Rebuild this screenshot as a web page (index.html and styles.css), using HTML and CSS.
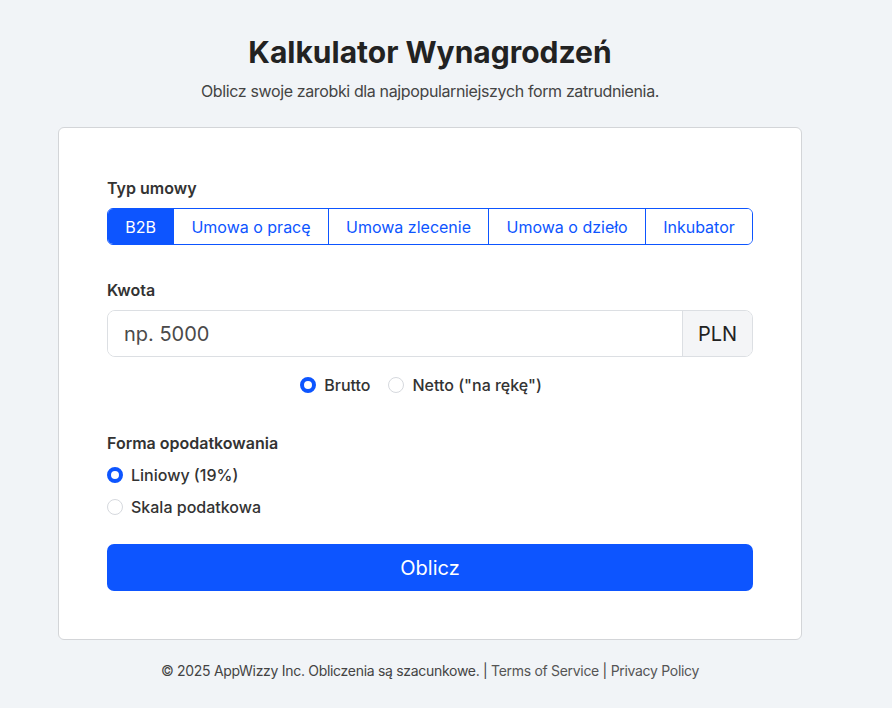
FILE: index.html
```html
<!DOCTYPE html>
<html lang="pl">
<head>
<meta charset="utf-8">
<title>Kalkulator Wynagrodzeń</title>
<link rel="stylesheet" href="styles.css">
</head>
<body>
<div class="page">
  <header class="header">
    <h1 class="title">Kalkulator Wynagrodzeń</h1>
    <p class="subtitle">Oblicz swoje zarobki dla najpopularniejszych form zatrudnienia.</p>
  </header>
  <main class="card">
    <div class="label">Typ umowy</div>
    <div class="btn-group">
      <button class="seg active">B2B</button>
      <button class="seg">Umowa o pracę</button>
      <button class="seg">Umowa zlecenie</button>
      <button class="seg">Umowa o dzieło</button>
      <button class="seg">Inkubator</button>
    </div>

    <div class="label label-kwota">Kwota</div>
    <div class="input-group">
      <input class="amount" type="text" placeholder="np. 5000">
      <span class="addon">PLN</span>
    </div>
    <div class="inline-radios">
      <label class="check inline"><input type="radio" name="mode" checked><span>Brutto</span></label>
      <label class="check inline"><input type="radio" name="mode"><span>Netto ("na rękę")</span></label>
    </div>

    <div class="label label-forma">Forma opodatkowania</div>
    <div class="stack-radios">
      <label class="check"><input type="radio" name="tax" checked><span>Liniowy (19%)</span></label>
      <label class="check"><input type="radio" name="tax"><span>Skala podatkowa</span></label>
    </div>

    <button class="submit">Oblicz</button>
  </main>
  <footer class="footer">© 2025 AppWizzy Inc. Obliczenia są szacunkowe. | <a href="#">Terms of Service</a> | <a href="#">Privacy Policy</a></footer>
</div>
</body>
</html>
```
FILE: styles.css
```css
* { box-sizing: border-box; }
html, body { margin: 0; padding: 0; }
body {
  background: #f1f4f7;
  font-family: Inter, "Noto Sans", "Liberation Sans", sans-serif;
  color: #333;
}
.page {
  width: 860px;
  display: flex;
  flex-direction: column;
  align-items: center;
}
.header { text-align: center; padding-top: 34px; }
.title {
  margin: 0;
  font-size: 30px;
  line-height: 36px;
  font-weight: 700;
  color: #222;
  letter-spacing: 0;
}
.subtitle {
  margin: 9px 0 0;
  font-size: 16px;
  line-height: 24px;
  color: #444;
  letter-spacing: -0.37px;
}
.card {
  margin-top: 24px;
  width: 744px;
  background: #fff;
  border: 1px solid #d3d5d8;
  border-radius: 6px;
  padding: 48px;
  display: flex;
  flex-direction: column;
}
.label {
  font-size: 16px;
  line-height: 24px;
  font-weight: 600;
  color: #333;
}
.btn-group {
  margin-top: 8px;
  display: flex;
  height: 37px;
  border: 1px solid #0d55ff;
  border-radius: 6px;
  overflow: hidden;
}
.seg {
  flex: 1 1 auto;
  border: 0;
  border-left: 1px solid #0d55ff;
  background: #fff;
  color: #0d55ff;
  font-family: inherit;
  font-size: 16px;
  padding: 0 12px;
  cursor: pointer;
}
.seg:first-child { border-left: 0; }
.seg.active { background: #0d55ff; color: #fff; }
.label-kwota { margin-top: 33px; }
.input-group {
  margin-top: 8px;
  display: flex;
  height: 47px;
  border: 1px solid #dcdfe3;
  border-radius: 8px;
  overflow: hidden;
}
.amount {
  flex: 1;
  border: 0;
  padding: 0 16px;
  font-family: inherit;
  font-size: 20px;
  color: #222;
  outline: none;
}
.amount::placeholder { color: #4a4a4a; }
.addon {
  width: 70px;
  background: #f4f5f7;
  border-left: 1px solid #dcdfe3;
  display: flex;
  align-items: center;
  justify-content: center;
  font-size: 20px;
  color: #222;
}
.inline-radios {
  margin-top: 16px;
  display: flex;
  justify-content: center;
}
.check {
  display: flex;
  align-items: center;
  gap: 8px;
  font-size: 16px;
  line-height: 24px;
  color: #333;
  font-weight: 500;
}
.check.inline { margin-right: 18px; }
.check input {
  appearance: none;
  -webkit-appearance: none;
  margin: 0;
  width: 16px;
  height: 16px;
  border-radius: 50%;
  border: 1px solid #d6d9de;
  background: #fff;
}
.check input:checked {
  border: 4px solid #0d55ff;
  background: #fff;
}
.label-forma { margin-top: 34px; }
.stack-radios {
  margin-top: 8px;
  display: flex;
  flex-direction: column;
  gap: 8px;
}
.submit {
  margin-top: 25px;
  height: 47px;
  border: 0;
  border-radius: 7px;
  background: #0d55ff;
  color: #fff;
  font-family: inherit;
  font-size: 20px;
  cursor: pointer;
}
.footer {
  margin-top: 20px;
  font-size: 14px;
  line-height: 21px;
  color: #444;
  letter-spacing: -0.3px;
}
.footer a { color: #555; text-decoration: none; }
```
